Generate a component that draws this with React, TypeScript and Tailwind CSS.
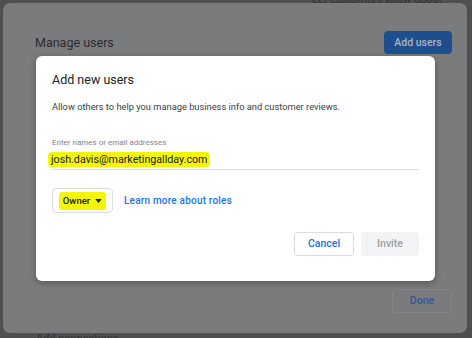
import React from "react";

export default function App() {
  return (
    <div
      className="relative w-[472px] h-[338px] overflow-hidden bg-[#4e4f50] p-[3px] pr-[5px] pb-[5px]"
      style={{ fontFamily: "Roboto, 'Noto Sans', Arial, sans-serif" }}
    >
      <div className="absolute right-[30px] top-[-8px] text-[11px] text-[#333435] whitespace-nowrap">Let customers know about</div>
      <div className="absolute left-[36px] bottom-[-9px] text-[11px] text-[#333435] whitespace-nowrap">Add connections</div>
      {/* dimmed Manage users panel */}
      <div className="relative h-full w-full rounded-[7px] bg-[#7a7b7c] flex flex-col px-[32px] pt-[28px] pb-[20px]">
        <div className="flex items-center justify-between">
          <div className="text-[12.5px] text-[#2b2c2d] leading-[22px]">Manage users</div>
          <div className="h-[23px] w-[68px] rounded-[4px] bg-[#1f4e8f] flex items-center justify-center text-[10.5px] font-medium text-[#a9b2bf] -mr-[17px]">
            Add users
          </div>
        </div>
        <div className="flex-1" />
        <div className="flex justify-end -mr-[17px]">
          <div className="h-[24px] w-[60px] rounded-[4px] border border-[#84858a] flex items-center justify-center text-[10.5px] font-medium text-[#2e5a96]">
            Done
          </div>
        </div>

        {/* white dialog */}
        <div className="absolute left-[33px] top-[53px] w-[399px] h-[225px] rounded-[6px] bg-white shadow-[0_2px_6px_rgba(0,0,0,0.3)] px-[16px] pt-[14px]">
          <div className="text-[12.5px] text-[#202124] leading-[20px]">Add new users</div>
          <div className="mt-[11px] text-[9.3px] text-[#3c4043] leading-[12px]">
            Allow others to help you manage business info and customer reviews.
          </div>
          <div className="mt-[24px] text-[8px] text-[#80868b] leading-[11px]">Enter names or email addresses</div>
          <div className="mt-[4px] flex border-b border-[#dadce0] pb-[2px]">
            <span className="-ml-[4px] px-[3px] rounded-[4px] bg-[#f5f50a] text-[10.7px] text-[#202124] leading-[15px]">
              josh.davis@marketingallday.com
            </span>
          </div>
          <div className="mt-[18px] flex items-center gap-[11px]">
            <div className="h-[25px] w-[61px] rounded-[4px] border border-[#dadce0] flex items-center justify-center">
              <span className="flex items-center gap-[5px] bg-[#f5f50a] rounded-[3px] px-[4px] py-[3px] text-[9.5px] font-medium text-[#202124] leading-[12px]">
                Owner
                <svg width="7" height="4" viewBox="0 0 8 5"><path d="M0 0h8L4 5z" fill="#202124" /></svg>
              </span>
            </div>
            <div className="text-[10px] font-medium text-[#1a73e8] tracking-[0.2px]">Learn more about roles</div>
          </div>
          <div className="mt-[19px] flex justify-end gap-[7px]">
            <div className="h-[24px] w-[60px] rounded-[4px] border border-[#dadce0] flex items-center justify-center text-[10.5px] font-medium text-[#1a73e8]">
              Cancel
            </div>
            <div className="h-[24px] w-[58px] rounded-[4px] bg-[#f1f3f4] flex items-center justify-center text-[10.5px] font-medium text-[#9aa0a6]">
              Invite
            </div>
          </div>
        </div>
      </div>
    </div>
  );
}
